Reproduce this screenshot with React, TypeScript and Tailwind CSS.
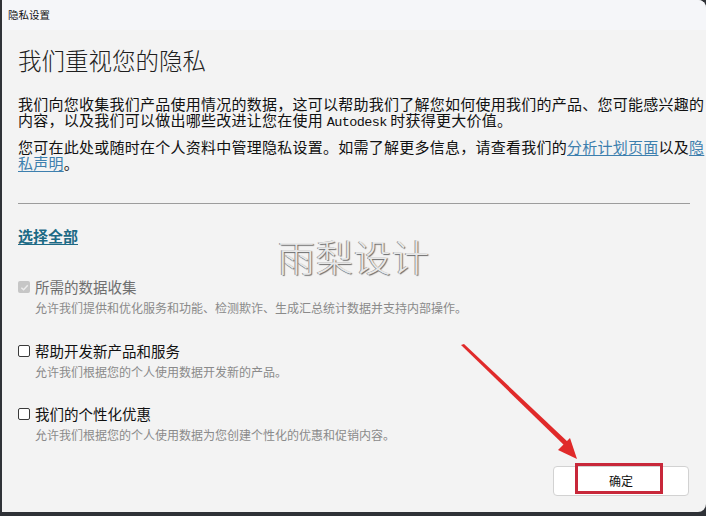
import React from 'react';

const cjk = { fontFamily: '"Noto Sans CJK SC", "Noto Sans", sans-serif' };

const Option = ({ label, desc, disabled, top }: { label: string; desc: string; disabled?: boolean; top: string }) => (
  <div className={top}>
    <div className="flex items-center h-4">
      {disabled ? (
        <span className="w-[12px] h-[12px] rounded-[2px] bg-[#c6c6c6] flex items-center justify-center">
          <svg width="9" height="9" viewBox="0 0 10 10">
            <path d="M1.5 5.2 L4 7.6 L8.6 2.6" fill="none" stroke="#ececec" strokeWidth="1.6" />
          </svg>
        </span>
      ) : (
        <span className="w-[12px] h-[12px] rounded-[2px] border border-[#3a3a3a] bg-white" />
      )}
      <span className={`ml-[5px] text-[14.5px] leading-4 ${disabled ? 'text-[#6f6f6f]' : 'text-[#111]'}`}>{label}</span>
    </div>
    <div className="mt-[5px] pl-[17px] text-[12px] leading-4 text-[#8a8a8a]">{desc}</div>
  </div>
);

const App = () => {
  return (
    <div className="w-[706px] h-[516px] bg-[#2f3237] overflow-hidden" style={cjk}>
      <div className="relative ml-[2px] w-[704px] h-[512px] bg-[#f3f3f3] rounded-tr-[8px] rounded-br-[8px] overflow-hidden">
        <div className="h-[30px] px-[6px] flex items-center bg-[#f5f6f9] text-[10.5px] text-[#111]">隐私设置</div>

        <div className="px-[16px]">
          <h1 className="mt-[18px] text-[23.5px] leading-6 font-light text-[#1e1e1e]">我们重视您的隐私</h1>

          <p className="mt-[24px] text-[15px] leading-4 tracking-[0.25px] text-[#111] whitespace-nowrap">
            我们向您收集我们产品使用情况的数据，这可以帮助我们了解您如何使用我们的产品、您可能感兴趣的
            <br />
            内容，以及我们可以做出哪些改进让您在使用 <span className="font-['Liberation_Mono'] text-[13.5px] tracking-[-0.6px]">Autodesk</span> 时获得更大价值。
          </p>
          <p className="mt-[8px] text-[15px] leading-4 tracking-[0.25px] text-[#111] whitespace-nowrap">
            您可在此处或随时在个人资料中管理隐私设置。如需了解更多信息，请查看我们的
            <span className="text-[#3d7fae] underline underline-offset-2">分析计划页面</span>以及
            <span className="text-[#3d7fae] underline underline-offset-2">隐</span>
            <br />
            <span className="text-[#3d7fae] underline underline-offset-2">私声明</span>。
          </p>

          <div className="mt-[32px] border-t border-[#9c9c9c]" />

          <div className="mt-[24px] h-4 text-[15px] leading-4 font-bold text-[#1d6a85] underline underline-offset-2">选择全部</div>

          <Option top="mt-[35px]" label="所需的数据收集" desc="允许我们提供和优化服务和功能、检测欺诈、生成汇总统计数据并支持内部操作。" disabled />
          <Option top="mt-[27px]" label="帮助开发新产品和服务" desc="允许我们根据您的个人使用数据开发新的产品。" />
          <Option top="mt-[26px]" label="我们的个性化优惠" desc="允许我们根据您的个人使用数据为您创建个性化的优惠和促销内容。" />

          <div className="mt-[23px] flex justify-end pr-[1px]">
            <button className="relative w-[136px] h-[30px] bg-white border border-[#d2d2d2] rounded-[4px] text-[12px] text-[#111]">
              确定
              <span className="absolute left-[21px] top-[-4px] w-[88px] h-[31px] border-[3px] border-[#c8283a]" />
            </button>
          </div>
        </div>

        <div className="absolute left-[276px] top-[238px] text-[37px] font-light leading-none text-[#e8e8e8] tracking-[1px] [text-shadow:1px_1px_1px_#6a6a6a,-1px_0_0_#9a9a9a] pointer-events-none">
          雨梨设计
        </div>

        <svg className="absolute left-0 top-0 pointer-events-none" width="704" height="512">
          <polygon points="459,345 462,344 567,443 564,447" fill="#e02a2a" />
          <polygon points="575,459 556,450 568,438" fill="#e02a2a" />
        </svg>
      </div>
    </div>
  );
};

export default App;
